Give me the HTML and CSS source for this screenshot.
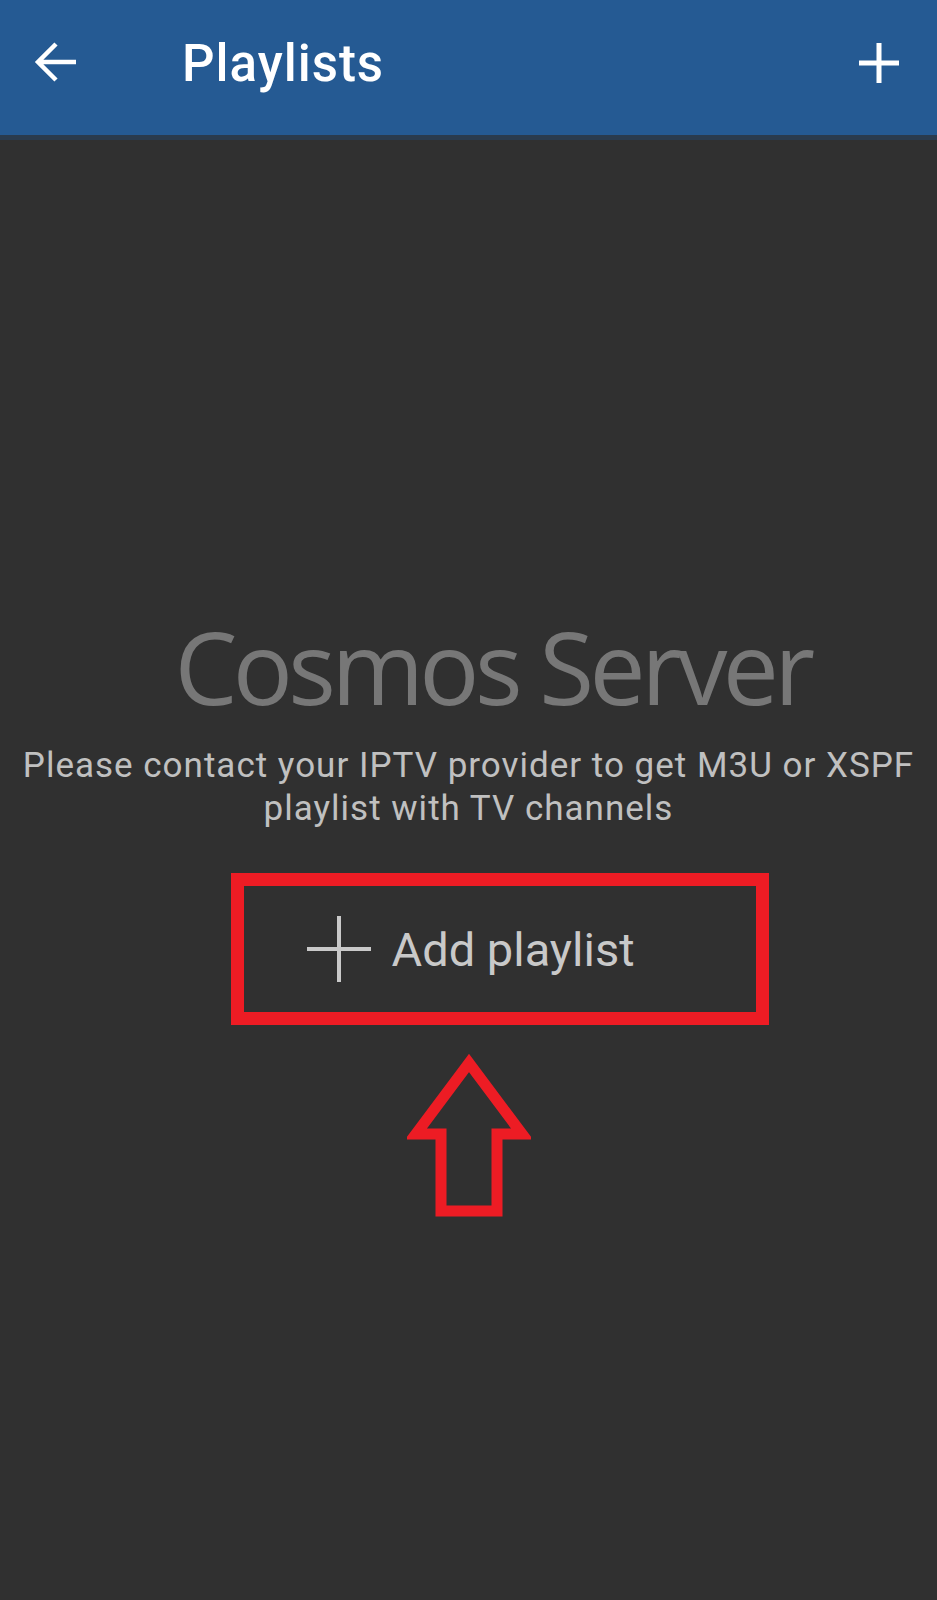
FILE: index.html
```html
<!DOCTYPE html>
<html lang="en">
<head>
  <meta charset="UTF-8">
  <title>Playlists</title>
  <meta name="viewport" content="width=device-width, initial-scale=1">
  <link rel="stylesheet" href="styles.css">
</head>
<body>
  <!-- App bar -->
  <header class="appbar">
    <button class="icon-btn back" aria-label="Back">
      <svg width="44" height="44" viewBox="0 0 44 44">
        <path d="M42 21H5 M22 3L4 21L22 39" fill="none" stroke="#fff" stroke-width="4.5"/>
      </svg>
    </button>
    <div class="title">Playlists</div>
    <button class="icon-btn add" aria-label="Add">
      <svg width="40" height="40" viewBox="0 0 40 40">
        <path d="M20 0V40 M0 20H40" fill="none" stroke="#fff" stroke-width="5"/>
      </svg>
    </button>
  </header>

  <!-- Empty state -->
  <main class="empty">
    <h1 class="brand">Cosmos Server</h1>
    <p class="hint">Please contact your IPTV provider to get M3U or XSPF<br>playlist with TV channels</p>

    <div class="add-box">
      <svg class="add-plus" width="64" height="66" viewBox="0 0 64 66">
        <path d="M32 0V66 M0 33H64" fill="none" stroke="#c9c9c9" stroke-width="4"/>
      </svg>
      <span class="add-label">Add playlist</span>
    </div>

    <svg class="pointer" width="124" height="164" viewBox="0 0 124 164">
      <polygon points="62,9 9,80 34,80 34,157 90,157 90,80 115,80" fill="none" stroke="#ed1c24" stroke-width="11"/>
    </svg>
  </main>
</body>
</html>
```

FILE: styles.css
```css
/* Global */
body {
  margin: 0;
  padding: 0;
  background-color: #303030;
  font-family: Roboto, "Liberation Sans", Arial, sans-serif;
  min-height: 1600px;
}

/* App bar */
.appbar {
  display: flex;
  align-items: center;
  box-sizing: border-box;
  height: 140px;
  background-color: #255a93;
  border-bottom: 5px solid #2a3b4e;
  padding: 0 38px 9px 34px;
}
.icon-btn {
  background: none;
  border: 0;
  padding: 0;
  display: flex;
  cursor: pointer;
}
.title {
  margin-left: 104px;
  font-size: 51px;
  font-weight: 500;
  letter-spacing: 1px;
  color: #fff;
  flex: 1;
}

/* Empty state */
.empty {
  display: flex;
  flex-direction: column;
  align-items: center;
  padding-top: 471px;
}
.brand {
  margin: 0 0 0 48px;
  font-family: "Open Sans", "Noto Sans", sans-serif;
  font-weight: 400;
  font-size: 100px;
  line-height: 110px;
  letter-spacing: -4.6px;
  color: #777;
}
.hint {
  margin: 23px 0 0;
  font-size: 35px;
  line-height: 43px;
  letter-spacing: 1px;
  text-align: center;
  color: #c0c0c0;
}
.add-box {
  box-sizing: border-box;
  display: flex;
  align-items: center;
  width: 538px;
  height: 152px;
  margin: 43px 0 0 62px;
  padding-left: 63px;
  border: 13px solid #ed1c24;
}
.add-label {
  margin-left: 21px;
  font-size: 47px;
  color: #c9c9c9;
}
.pointer {
  margin-top: 29px;
}
```
